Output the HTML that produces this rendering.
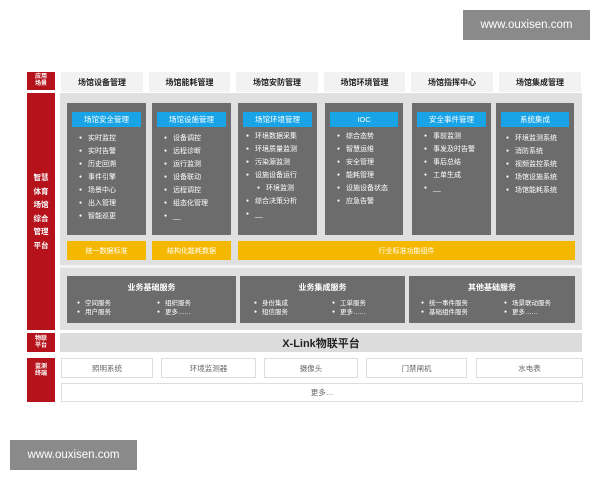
<!DOCTYPE html>
<html><head><meta charset="utf-8"><style>
*{margin:0;padding:0;box-sizing:border-box}
body{width:600px;height:480px;background:#fff;position:relative;overflow:hidden;font-family:"Liberation Sans","Noto Sans CJK SC",sans-serif}
.a{position:absolute}
.red{background:#b5121b;color:#fff;font-weight:bold;display:flex;align-items:center;justify-content:center;text-align:center}
.hd{background:#f2f2f2;font-size:8px;color:#222;display:flex;align-items:center;justify-content:center;font-weight:bold}
.pn{background:#6c6c6c;top:103px;height:132px}
.bt{position:absolute;left:5px;right:5px;top:9px;height:15px;background:#18a4e6;color:#fff;font-size:7.5px;display:flex;align-items:center;justify-content:center}
.pn ul{position:absolute;top:29px;left:12px;list-style:none;color:#fff;font-size:7px;line-height:13px}
.pn li:before{content:"●";font-size:5px;margin-right:6px;vertical-align:1px}
.yl{background:#f5b800;color:#fff;font-size:7px;display:flex;align-items:center;justify-content:center;top:241px;height:19px}
.sv{background:#6c6c6c;top:276px;height:47px;color:#fff}
.sv b{display:block;text-align:center;font-size:8px;margin-top:6px}
.sv .c{position:absolute;top:23px;font-size:6.5px;line-height:9px}
.sv .c div:before{content:"●";font-size:5px;margin-right:5px;vertical-align:1px}
.dv{border:1px solid #ddd;background:#fff;font-size:7.5px;color:#666;display:flex;align-items:center;justify-content:center;top:358px;height:20px}
.wm{background:#8a8a8a;color:#fff;font-size:11.5px;display:flex;align-items:center;justify-content:center}
</style></head><body>
<div class="a wm" style="left:463px;top:10px;width:127px;height:30px">www.ouxisen.com</div>
<div class="a wm" style="left:10px;top:440px;width:127px;height:30px">www.ouxisen.com</div>

<div class="a red" style="left:27px;top:72px;width:28px;height:18px;font-size:6px;line-height:7px">应用<br>场景</div>
<div class="a hd" style="left:61px;top:72px;width:82px;height:20px">场馆设备管理</div>
<div class="a hd" style="left:149px;top:72px;width:81px;height:20px">场馆能耗管理</div>
<div class="a hd" style="left:236px;top:72px;width:82px;height:20px">场馆安防管理</div>
<div class="a hd" style="left:324px;top:72px;width:81px;height:20px">场馆环境管理</div>
<div class="a hd" style="left:411px;top:72px;width:82px;height:20px">场馆指挥中心</div>
<div class="a hd" style="left:499px;top:72px;width:82px;height:20px">场馆集成管理</div>

<div class="a red" style="left:27px;top:93px;width:28px;height:237px;font-size:7.5px;line-height:13.5px">智慧<br>体育<br>场馆<br>综合<br>管理<br>平台</div>
<div class="a" style="left:60px;top:93px;width:522px;height:237px;background:#e0e0e0"></div>
<div class="a" style="left:60px;top:265px;width:522px;height:3px;background:#f4f4f4"></div>

<div class="a pn" style="left:67px;width:79px"><div class="bt">场馆安全管理</div><ul><li>实时监控</li><li>实时告警</li><li>历史回溯</li><li>事件引擎</li><li>场景中心</li><li>出入管理</li><li>智能巡更</li></ul></div>
<div class="a pn" style="left:152px;width:79px"><div class="bt">场馆设施管理</div><ul><li>设备调控</li><li>远程诊断</li><li>运行监测</li><li>设备联动</li><li>远程调控</li><li>组态化管理</li><li>__</li></ul></div>
<div class="a pn" style="left:238px;width:79px"><div class="bt">场馆环境管理</div><ul style="left:8px;top:27px"><li>环境数据采集</li><li>环境质量监测</li><li>污染源监测</li><li>设施设备运行</li><li style="padding-left:11px">环境监测</li><li>综合决策分析</li><li>__</li></ul></div>
<div class="a pn" style="left:325px;width:78px"><div class="bt">IOC</div><ul style="top:27px"><li>综合态势</li><li>智慧运维</li><li>安全管理</li><li>能耗管理</li><li>设施设备状态</li><li>应急告警</li></ul></div>
<div class="a pn" style="left:412px;width:79px"><div class="bt">安全事件管理</div><ul style="top:27px"><li>事前监测</li><li>事发及时告警</li><li>事后总结</li><li>工单生成</li><li>__</li></ul></div>
<div class="a pn" style="left:496px;width:78px"><div class="bt">系统集成</div><ul style="top:29px;left:10px"><li>环境监测系统</li><li>消防系统</li><li>视频监控系统</li><li>场馆设施系统</li><li>场馆能耗系统</li></ul></div>

<div class="a yl" style="left:67px;width:79px">统一数据标准</div>
<div class="a yl" style="left:152px;width:79px">结构化能耗数据</div>
<div class="a yl" style="left:238px;width:337px">行业标准功能组件</div>

<div class="a sv" style="left:67px;width:169px"><b>业务基础服务</b><div class="c" style="left:10px"><div>空间服务</div><div>用户服务</div></div><div class="c" style="left:90px"><div>组织服务</div><div>更多……</div></div></div>
<div class="a sv" style="left:240px;width:165px"><b>业务集成服务</b><div class="c" style="left:14px"><div>身份集成</div><div>短信服务</div></div><div class="c" style="left:92px"><div>工单服务</div><div>更多……</div></div></div>
<div class="a sv" style="left:409px;width:166px"><b>其他基础服务</b><div class="c" style="left:12px"><div>统一事件服务</div><div>基础组件服务</div></div><div class="c" style="left:95px"><div>场景联动服务</div><div>更多……</div></div></div>

<div class="a red" style="left:27px;top:333px;width:28px;height:19px;font-size:6px;line-height:7px">物联<br>平台</div>
<div class="a" style="left:60px;top:333px;width:522px;height:19px;background:#dcdcdc;font-size:11px;font-weight:bold;color:#222;display:flex;align-items:center;justify-content:center">X-Link物联平台</div>

<div class="a red" style="left:27px;top:358px;width:28px;height:44px;font-size:6px;line-height:7px;align-items:flex-start;padding-top:6px">监测<br>终端</div>
<div class="a dv" style="left:61px;width:92px">照明系统</div>
<div class="a dv" style="left:161px;width:95px">环境监测器</div>
<div class="a dv" style="left:264px;width:94px">摄像头</div>
<div class="a dv" style="left:366px;width:101px">门禁闸机</div>
<div class="a dv" style="left:476px;width:107px">水电表</div>
<div class="a dv" style="left:61px;width:522px;top:383px;height:19px">更多…</div>
</body></html>
